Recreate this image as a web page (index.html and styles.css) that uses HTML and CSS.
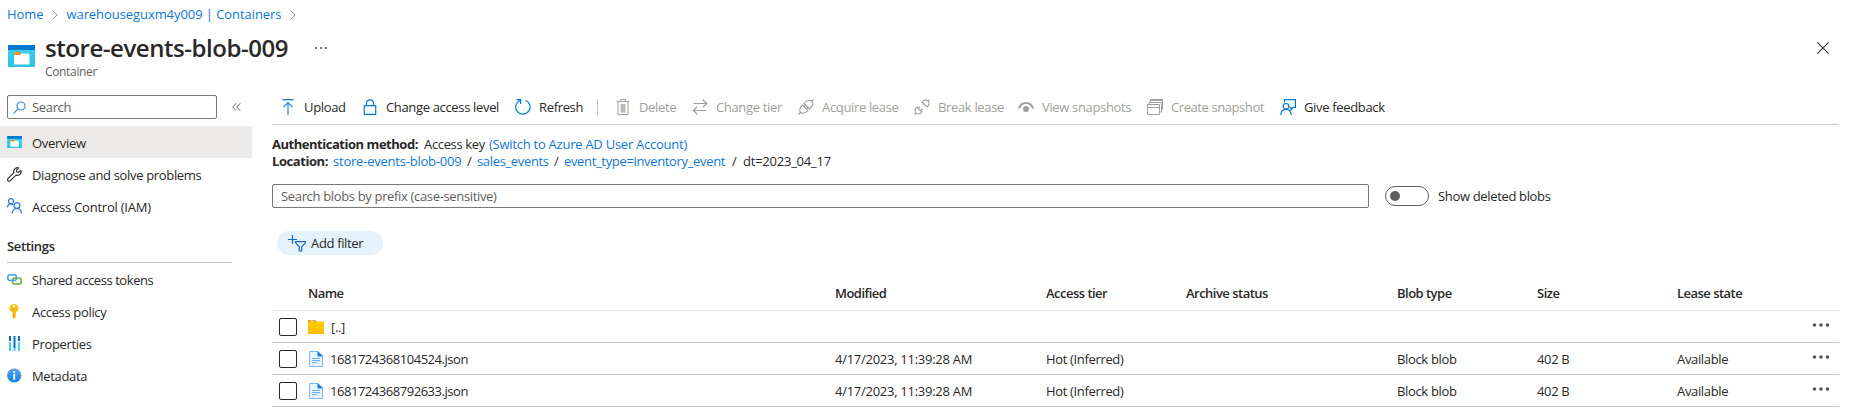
FILE: index.html
```
<!DOCTYPE html>
<html lang="en">
<head>
<meta charset="utf-8">
<title>store-events-blob-009</title>
<link rel="stylesheet" href="styles.css">
</head>
<body>
<svg width="0" height="0" class="defs">
  <defs>
    <linearGradient id="gcyan" x1="0" y1="0" x2="0" y2="1"><stop offset="0" stop-color="#32d4f5"/><stop offset="1" stop-color="#2fc0e0"/></linearGradient>
    <linearGradient id="ginfo" x1="0" y1="0" x2="0" y2="1"><stop offset="0" stop-color="#5ea0ef"/><stop offset="1" stop-color="#0f86dc"/></linearGradient>
    <linearGradient id="gfold" x1="0" y1="0" x2="0" y2="1"><stop offset="0" stop-color="#ffd400"/><stop offset="1" stop-color="#ffb900"/></linearGradient>
    <symbol id="container" viewBox="0 0 27 22">
      <rect width="27" height="22" rx="1" fill="url(#gcyan)"/><path d="M0 5V1a1 1 0 0 1 1-1h25a1 1 0 0 1 1 1v4z" fill="#0078d4"/>
      <path d="M6 8a1 1 0 0 1 1-1h5.500l1 1.500H20.500a1 1 0 0 1 1 1V18.500a1 1 0 0 1-1 1H7a1 1 0 0 1-1-1z" fill="#fff"/><path d="M6 10V8a1 1 0 0 1 1-1h5.500l1 1.500-1.500 1.500z" fill="#f78d1e"/>
    </symbol>
    <symbol id="file" viewBox="0 0 14 16">
      <path d="M.5.500h8.500l4.500 4.500v10.500H.5z" fill="#e8f3fd" stroke="#7fb8f0"/><path d="M8.500 0 14 5.500H8.500z" fill="#0f7fd8"/>
      <path d="M3 7.500h8M3 9.500h8M3 11.500h5" stroke="#6caef0" stroke-width="1.100"/>
    </symbol>
    <symbol id="dots" viewBox="0 0 18 4"><g fill="#555"><circle cx="2.500" cy="2" r="1.800"/><circle cx="9" cy="2" r="1.800"/><circle cx="15.500" cy="2" r="1.800"/></g></symbol>
    <symbol id="chev" viewBox="0 0 6 10"><path d="M.5.500 5.200 5 .5 9.500" fill="none" stroke="#8a8a8a"/></symbol>
  </defs>
</svg>

<nav class="crumbs">
  <a>Home</a><svg width="6" height="10"><use href="#chev"/></svg>
  <a>warehouseguxm4y009 | Containers</a><svg width="6" height="10"><use href="#chev"/></svg>
</nav>

<header class="head">
  <svg class="head-icon" width="27" height="22"><use href="#container"/></svg>
  <div class="head-text">
    <h1>store-events-blob-009</h1>
    <div class="subtitle">Container</div>
  </div>
  <svg class="head-more" width="12" height="2" viewBox="0 0 12 2"><path d="M0 0h2v2H0zM5 0h2v2H5zM10 0h2v2h-2z" fill="#777"/></svg>
  <svg class="close" width="12" height="12" viewBox="0 0 12 12"><path d="M.4.400l11.200 11.200M11.600.400.4 11.600" stroke="#333" stroke-width="1.100"/></svg>
</header>

<div class="body">
  <aside class="side">
    <div class="side-top">
      <div class="side-search">
        <svg width="13" height="13" viewBox="0 0 13 13" fill="none" stroke="#3b8ad8" stroke-width="1.200"><circle cx="8" cy="5" r="4"/><path d="M5.200 7.800.6 12.400"/></svg>
        <span>Search</span>
      </div>
      <svg class="collapse" width="9" height="8" viewBox="0 0 9 8" fill="none" stroke="#666"><path d="M4.200.300.7 4l3.500 3.700M8.200.300 4.700 4l3.500 3.700"/></svg>
    </div>
    <div class="item active"><svg width="15" height="12"><use href="#container"/></svg><span>Overview</span></div>
    <div class="item"><svg width="15" height="15" viewBox="0 0 15 15" fill="none" stroke="#333" stroke-width="1.200" stroke-linejoin="round"><path d="M13.900 3.400 11.600 5.300 9.700 5l-.3-1.900L11.800 1C9.600.200 7.100 1.300 6.700 3.800c-.1.700 0 1.300.2 1.900L1.100 11.400c-.8.800-.7 1.800-.1 2.400.7.600 1.600.6 2.300-.1l5.800-5.600c2.900 1 5.600-1.500 4.800-4.700z"/></svg><span>Diagnose and solve problems</span></div>
    <div class="item"><svg width="15" height="16" viewBox="0 0 15 16" fill="none" stroke="#2672d9" stroke-width="1.200"><circle cx="4" cy="3.200" r="2.500"/><path d="M.6 9.200C.7 7.200 2 5.800 4 5.800c1 0 1.700.3 2.300.8"/><circle cx="9.900" cy="7.500" r="2.900"/><path d="M5.200 15.500c.2-3 2-5 4.700-5s4.400 2 4.600 5"/></svg><span class="mid">Access Control (IAM)</span></div>
    <h2>Settings</h2>
    <div class="item"><svg width="15" height="11" viewBox="0 0 15 11" fill="none" stroke-width="1.500"><path d="M9.500 4.500V3.300C9.500 1.700 8.500.8 7 .8H3.300C1.700.800.8 1.900.8 3.300v.8c0 1.500 1 2.500 2.500 2.500h2.500" stroke="#4a9be8"/><rect x="5.500" y="4.100" width="8.700" height="5.900" rx="2.600" stroke="#6bb33c"/><path d="M9.500 3.300v1c0 1.500-1 2.300-2.500 2.300H5" stroke="#4a9be8"/></svg><span class="tight">Shared access tokens</span></div>
    <div class="item"><svg width="15" height="15" viewBox="0 0 15 15"><path d="M7 0c2.800 0 4.600 1.900 4.600 4.300 0 1.900-1.200 3.300-2.700 3.900v4.700L7.200 15l-1.700-1.700V8.200C3.700 7.600 2.400 6.200 2.400 4.300 2.400 1.900 4.300 0 7 0z" fill="#fdc019"/><circle cx="7" cy="2.300" r="1.100" fill="#fff"/><path d="M4.800 5h4.500M6.500 9v4.500" stroke="#e59a0c" stroke-width=".9"/></svg><span>Access policy</span></div>
    <div class="item"><svg width="15" height="15" viewBox="0 0 15 15"><path d="M2 0h2v5H2zM6.500 0h2v12h-2zM11 0h2v5h-2z" fill="#0f6cbd"/><path d="M2 6h2v9H2zM6.500 12h2v3h-2zM11 6h2v9h-2z" fill="#42d3f2"/></svg><span>Properties</span></div>
    <div class="item"><svg width="15" height="15" viewBox="0 0 15 15"><circle cx="7.200" cy="7.500" r="7.100" fill="url(#ginfo)"/><circle cx="7.200" cy="4" r="1.100" fill="#fff"/><path d="M7.200 6.100v5.600" stroke="#fff" stroke-width="1.900"/></svg><span>Metadata</span></div>
  </aside>

  <main class="main">
    <div class="toolbar">
      <div class="cmd"><svg width="16" height="16" viewBox="0 0 16 16" fill="none" stroke="#2b88d8" stroke-width="1.200"><path d="M2.500.7h11" stroke="#0f6cbd"/><path d="M8 16V4M3.500 8 8 3.500 12.500 8"/></svg><span>Upload</span></div>
      <div class="cmd"><svg width="16" height="16" viewBox="0 0 16 16" fill="none" stroke="#0078d4" stroke-width="1.200"><path d="M2.300 6.600h11.400v8.800H2.300zM4.500 6.500V4c0-4.300 7-4.300 7 0v2.500"/></svg><span>Change access level</span></div>
      <div class="cmd"><svg width="16" height="16" viewBox="0 0 16 16" fill="none" stroke="#0078d4" stroke-width="1.200"><path d="M4.800 1.500A7.200 7.200 0 1 0 10.500 1.300M1.500.700H5.600V5"/></svg><span>Refresh</span></div>
      <i class="sep"></i>
      <div class="cmd off"><svg width="16" height="16" viewBox="0 0 16 16" fill="none" stroke="#a19f9d"><path d="M1.500 2.500h13M5.500 2V.5h5V2M3 2.500v13h10v-13"/><path d="M5.500 5h5v8.500h-5z" fill="#bbb9b7" stroke="none"/></svg><span>Delete</span></div>
      <div class="cmd off"><svg width="16" height="16" viewBox="0 0 16 16" fill="none" stroke="#a19f9d" stroke-width="1.200"><path d="M1.500 4.500h13M10.800.700l3.900 3.800-3.900 3.800M14.500 11.500h-13M5.200 7.700l-3.900 3.800 3.900 3.800"/></svg><span>Change tier</span></div>
      <div class="cmd off"><svg width="16" height="16" viewBox="0 0 16 16" fill="none" stroke="#a19f9d" stroke-width="1.100"><path d="M.5 15.500 3 13M13 3l2.500-2.500M6 4.500l5.500 5.500c1.800-1.300 3.300-3.700 3.300-5.200C14.900 2.900 13.100 1.100 11.200 1.200 9.500 1.300 7.300 2.700 6 4.500zM4.500 6 10 11.500c-1.800 2-3.300 2.800-5 2.800C3 14.300 1.700 13 1.700 11c0-1.700 1.100-3.300 2.800-5zM7.500 6 6 7.500M10 8.500 8.500 10"/></svg><span>Acquire lease</span></div>
      <div class="cmd off"><svg width="16" height="16" viewBox="0 0 16 16" fill="none" stroke="#a19f9d" stroke-width="1.100"><path d="M.5 15.500 2.300 13.700M13.700 2.300l1.800-1.800M8 3l5 5c1.300-1 2-2.200 2-3.500 0-2-1.500-3.500-3.500-3.500C10.200 1 9 1.700 8 3zM3 8l5 5c-1.100 1.300-2.200 2-3.500 2-2 0-3.500-1.500-3.500-3.500C1 10.200 1.700 9 3 8zM6 7.500 4.700 9M8.500 10 7 11.300"/></svg><span>Break lease</span></div>
      <div class="cmd off"><svg width="16" height="16" viewBox="0 0 16 16"><path d="M1 9.500C2 5.800 4.700 4 8 4s6 1.800 7 5.500" fill="none" stroke="#a19f9d" stroke-width="2"/><circle cx="8" cy="10" r="3" fill="#a19f9d"/></svg><span>View snapshots</span></div>
      <div class="cmd off"><svg width="16" height="16" viewBox="0 0 16 16" fill="none" stroke="#a19f9d"><path d="M.5 5.500h12v10H.5zM.5 8.500h12M2 5V3.500h12.500V13H13M3.500 3V.5h12v10h-1M3.500 1.500h12"/></svg><span class="tight">Create snapshot</span></div>
      <div class="cmd"><svg width="16" height="16" viewBox="0 0 16 16" fill="none" stroke="#0078d4" stroke-width="1.200"><path d="M4.500 3.500V.600h10.900v7.800h-2L11 10.800V8.400H9.700"/><circle cx="6" cy="7.300" r="2.800"/><path d="M.7 16c.3-3.600 2.300-5.700 5.300-5.700s5 2.100 5.300 5.700"/></svg><span>Give feedback</span></div>
    </div>

    <div class="info">
      <div class="line"><b>Authentication method:</b><span>Access key</span><a>(Switch to Azure AD User Account)</a></div>
      <div class="line loc"><b>Location:</b><a>store-events-blob-009</a><i>/</i><a class="c2">sales_events</a><i>/</i><a class="c3">event_type=inventory_event</a><i>/</i><span class="mid">dt=2023_04_17</span></div>
    </div>

    <div class="search-row">
      <div class="search">Search blobs by prefix (case-sensitive)</div>
      <div class="toggle"></div>
      <span>Show deleted blobs</span>
    </div>

    <div class="filter"><svg width="18" height="17" viewBox="0 0 18 17" fill="none" stroke="#0f6cd1" stroke-width="1.200"><path d="M4.500 0v9M0 4.500h9M7.600 6.600h9.800v1.200l-3.700 4V16h-2.400v-4.200l-3.700-4z"/></svg><span>Add filter</span></div>

    <div class="table">
      <div class="row th"><span></span><span>Name</span><span>Modified</span><span>Access tier</span><span>Archive status</span><span>Blob type</span><span>Size</span><span>Lease state</span></div>
      <div class="row"><i class="check"></i><div class="name"><svg width="16" height="14" viewBox="0 0 16 14"><path d="M0 .8Q0 0 .8 0H7l1.500 1.500H16V14H0z" fill="url(#gfold)"/><path d="M0 2.500V.8Q0 0 .8 0H7l1.200 1.200L7 2.500z" fill="#dfa21b"/><path d="M2 1.300h4" stroke="#fff2c8"/></svg><span>[..]</span></div><span></span><span></span><span></span><span></span><span></span><span></span><svg class="more" width="18" height="4"><use href="#dots"/></svg></div>
      <div class="row"><i class="check"></i><div class="name"><svg width="16" height="16"><use href="#file"/></svg><span class="num">1681724368104524.json</span></div><span class="date">4/17/2023, 11:39:28 AM</span><span>Hot (Inferred)</span><span></span><span>Block blob</span><span>402 B</span><span>Available</span><svg class="more" width="18" height="4"><use href="#dots"/></svg></div>
      <div class="row"><i class="check"></i><div class="name"><svg width="16" height="16"><use href="#file"/></svg><span class="num">1681724368792633.json</span></div><span class="date">4/17/2023, 11:39:28 AM</span><span>Hot (Inferred)</span><span></span><span>Block blob</span><span>402 B</span><span>Available</span><svg class="more" width="18" height="4"><use href="#dots"/></svg></div>
    </div>
  </main>
</div>
</body>
</html>
```
FILE: styles.css
```
* { box-sizing: border-box; }
body {
  margin: 0;
  height: 411px;
  overflow: hidden;
  background: #fff;
  color: #292827;
  font: 13px/18px "Open Sans", "Noto Sans", sans-serif;
  letter-spacing: -0.34px;
  white-space: nowrap;
}
a { color: #0f78d4; }
i { font-style: normal; }
svg { display: block; flex: none; }
.defs { position: absolute; }
.mid { letter-spacing: -0.23px; }
.tight { letter-spacing: -0.42px; }

.crumbs { display: flex; align-items: center; height: 29px; padding-left: 7px; letter-spacing: -0.07px; gap: 9px; }
.crumbs a { padding-bottom: 2px; }
.crumbs a + svg { margin-right: -1px; }

.head { display: flex; height: 66px; padding-left: 8px; }
.head-icon { margin-top: 16px; }
.head-text { margin-left: 10px; width: 270px; padding-top: 2px; }
h1 { margin: 0; font-size: 24px; line-height: 34px; font-weight: 600; letter-spacing: -0.45px; }
.subtitle { font-size: 12px; line-height: 16px; margin-top: -1px; color: #605e5c; }
.head-more { margin-top: 18px; }
.close { margin: 13px 30px 0 auto; }

.body { display: flex; }
.side { width: 252px; }
.side-top { display: flex; align-items: center; height: 24px; margin-bottom: 7px; padding-left: 7px; }
.side-search { display: flex; align-items: center; gap: 6px; width: 210px; height: 24px; padding-left: 5px; border: 1px solid #7a7876; border-radius: 2px; color: #605e5c; }
.collapse { margin-left: 15px; }
.item { display: flex; align-items: center; gap: 10px; height: 32px; padding-left: 7px; }
.item span { padding-top: 2px; }
.active { background: #edebe9; }
h2 { margin: 15px 20px 0 7px; height: 26px; border-bottom: 1px solid #c8c6c4; font-size: 13px; line-height: 19px; font-weight: 600; }

.main { width: 1567px; margin-left: 20px; }
.toolbar {
  display: grid;
  grid-template-columns: 82px 153px 78px 22px 77px 106px 116px 104px 129px 133px 1fr;
  align-items: center;
  height: 30px;
  padding: 0 0 6px 8px;
  border-bottom: 1px solid #d2d0ce;
}
.cmd { display: flex; align-items: center; gap: 8px; }
.off { color: #a19f9d; }
.sep { width: 1px; height: 16px; margin-left: 4px; background: #c8c6c4; }

.info { padding-top: 10px; }
.line { display: flex; height: 17px; line-height: 18px; }
.line b { width: 152px; letter-spacing: -0.47px; }
.line span { width: 65px; }
.line > a { letter-spacing: -0.25px; }
.loc b { width: 61px; letter-spacing: -0.43px; }
.loc a { width: 129px; letter-spacing: -0.22px; }
.loc i { width: 15px; padding-left: 5px; }
.loc .c2 { width: 72px; letter-spacing: -0.34px; }
.loc .c3 { width: 163px; letter-spacing: -0.34px; }
.loc .mid { width: auto; padding-left: 1px; }

.search-row { display: flex; align-items: center; height: 24px; margin-top: 15px; }
.search-row > span { padding-bottom: 1px; }
.search { width: 1097px; height: 24px; line-height: 23px; padding-left: 8px; border: 1px solid #7a7876; border-radius: 2px; color: #605e5c; }
.toggle { width: 44px; height: 20px; margin: 0 9px 0 16px; border: 1px solid #605e5c; border-radius: 10px; padding: 4px; }
.toggle::before { content: ""; display: block; width: 10px; height: 10px; border-radius: 50%; background: #605e5c; }

.filter { display: flex; align-items: center; gap: 5px; width: 106px; height: 24px; margin: 23px 0 0 5px; padding-left: 11px; border-radius: 12px; background: #e5f1fb; }

.table { margin-top: 24px; }
.row {
  display: grid;
  grid-template-columns: 36px 527px 211px 140px 211px 140px 140px 135px 1fr;
  align-items: center;
  height: 32px;
  border-bottom: 1px solid #c8c6c4;
}
.th { border-color: #e6e4e2; font-weight: 600; letter-spacing: -0.52px; }
.row > span { padding-top: 1px; }
.th > span { padding: 0 0 3px; }
.check { width: 18px; height: 18px; margin: 1px 0 0 7px; border: 1px solid #292827; border-radius: 2px; }
.name { display: flex; align-items: center; gap: 7px; }
.num { letter-spacing: -0.46px; margin-left: -1px; }
.name span { padding-top: 1px; }
.date { letter-spacing: -0.27px; }
.more { margin-top: -3px; }
```
